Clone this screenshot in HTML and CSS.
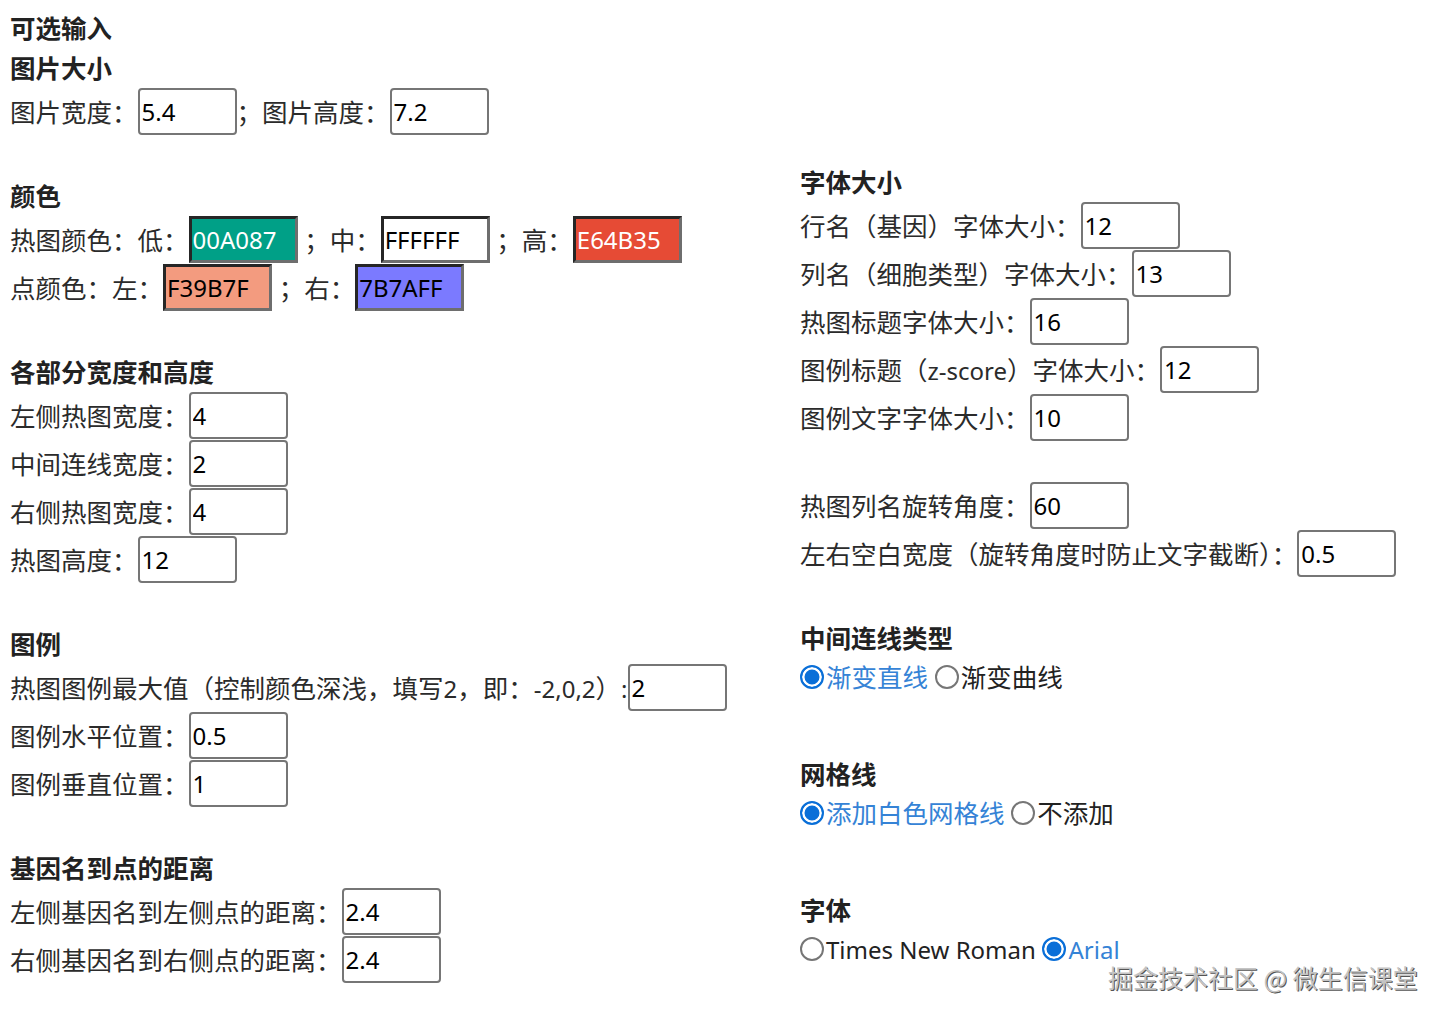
FILE: index.html
```html
<!DOCTYPE html>
<html lang="zh-CN">
<head>
<meta charset="utf-8">
<title>可选输入</title>
<link rel="stylesheet" href="styles.css">
</head>
<body>
<div class="page">
  <div class="col col-left">
    <div class="head">可选输入</div>
    <div class="head">图片大小</div>
    <div class="row">图片宽度：<input class="box" value="5.4">；图片高度：<input class="box" value="7.2"></div>
    <div class="gap"></div>

    <div class="head">颜色</div>
    <div class="row">热图颜色：低：<input class="swatch sw-low" value="00A087"> ；中：<input class="swatch sw-mid" value="FFFFFF"> ；高：<input class="swatch sw-high" value="E64B35"></div>
    <div class="row">点颜色：左：<input class="swatch sw-left" value="F39B7F"> ；右：<input class="swatch sw-right" value="7B7AFF"></div>
    <div class="gap"></div>

    <div class="head">各部分宽度和高度</div>
    <div class="row">左侧热图宽度：<input class="box" value="4"></div>
    <div class="row">中间连线宽度：<input class="box" value="2"></div>
    <div class="row">右侧热图宽度：<input class="box" value="4"></div>
    <div class="row">热图高度：<input class="box" value="12"></div>
    <div class="gap"></div>

    <div class="head">图例</div>
    <div class="row">热图图例最大值（控制颜色深浅，填写<span class="lat">2</span>，即：<span class="lat">-2,0,2</span>）<span class="lat">:</span><input class="box" value="2"></div>
    <div class="row">图例水平位置：<input class="box" value="0.5"></div>
    <div class="row">图例垂直位置：<input class="box" value="1"></div>
    <div class="gap"></div>

    <div class="head">基因名到点的距离</div>
    <div class="row">左侧基因名到左侧点的距离：<input class="box" value="2.4"></div>
    <div class="row">右侧基因名到右侧点的距离：<input class="box" value="2.4"></div>
  </div>

  <div class="col col-right">
    <div class="head">字体大小</div>
    <div class="row">行名（基因）字体大小：<input class="box" value="12"></div>
    <div class="row">列名（细胞类型）字体大小：<input class="box" value="13"></div>
    <div class="row">热图标题字体大小：<input class="box" value="16"></div>
    <div class="row">图例标题（<span class="lat">z-score</span>）字体大小：<input class="box" value="12"></div>
    <div class="row">图例文字字体大小：<input class="box" value="10"></div>
    <div class="gap"></div>
    <div class="row">热图列名旋转角度：<input class="box" value="60"></div>
    <div class="row">左右空白宽度（旋转角度时防止文字截断）：<input class="box" value="0.5"></div>
    <div class="gap"></div>

    <div class="head">中间连线类型</div>
    <div class="radios"><label class="opt on"><input type="radio" name="line" checked>渐变直线</label> <label class="opt"><input type="radio" name="line">渐变曲线</label></div>
    <div class="gap-lg"></div>

    <div class="head">网格线</div>
    <div class="radios"><label class="opt on"><input type="radio" name="grid" checked>添加白色网格线</label> <label class="opt"><input type="radio" name="grid">不添加</label></div>
    <div class="gap-lg"></div>

    <div class="head">字体</div>
    <div class="radios"><label class="opt"><input type="radio" name="font"><span class="lat">Times New Roman</span></label> <label class="opt on"><input type="radio" name="font" checked><span class="lat">Arial</span></label></div>
  </div>
</div>
<div class="watermark">掘金技术社区 @ 微生信课堂</div>
</body>
</html>
```

FILE: styles.css
```css
html, body {
  background: #ffffff;
}
body {
  margin: 8px;
  font-family: "Noto Sans", "Noto Sans CJK SC", sans-serif;
  font-size: 25.5px;
  color: #2b2b2b;
}
.page {
  display: flex;
}
.col-left {
  width: 790px;
  padding-left: 2px;
}
.col-right {
  flex: 1;
  padding-top: 154px;
}
.head {
  height: 40px;
  line-height: 40px;
  font-weight: bold;
  color: #222;
}
.row {
  height: 48px;
  line-height: 48px;
  white-space: nowrap;
}
.lat {
  font-size: 24px;
}
.gap {
  height: 40px;
}
.gap-lg {
  height: 58px;
}
input {
  font-family: "Noto Sans", "Noto Sans CJK SC", sans-serif;
  font-size: 24px;
  vertical-align: middle;
  box-sizing: border-box;
  margin: 0;
}
.box {
  width: 99px;
  height: 47px;
  border: 2px solid #767676;
  border-radius: 4px;
  padding: 0 2px;
  color: #000;
  background: #fff;
  position: relative;
  top: -4px;
}
.swatch {
  width: 109px;
  height: 47px;
  border-style: solid;
  border-width: 3px;
  border-color: #262626 #6e6e6e #6e6e6e #262626;
  padding: 0 1px;
  position: relative;
  top: -4px;
}
.sw-low { background: #00A087; color: #fff; }
.sw-mid { background: #FFFFFF; color: #000; }
.sw-high { background: #E64B35; color: #fff; }
.sw-left { background: #F39B7F; color: #000; }
.sw-right { background: #7B7AFF; color: #000; }

.radios {
  height: 38px;
  line-height: 38px;
  white-space: nowrap;
}
.opt {
  color: #222;
}
.opt.on {
  color: #3583d6;
}
.opt input {
  appearance: none;
  -webkit-appearance: none;
  width: 24px;
  height: 24px;
  border: 2px solid #767676;
  border-radius: 50%;
  background: #fff;
  margin: 0 2px 0 0;
  position: relative;
  top: -3px;
}
.opt input:checked {
  border-color: #0a6fd8;
  background: #0a6fd8;
  box-shadow: inset 0 0 0 2.5px #fff;
}
.watermark {
  position: absolute;
  left: 1108px;
  top: 959px;
  font-family: "Noto Sans CJK SC", sans-serif;
  font-size: 25px;
  line-height: 36px;
  color: #c4c4c4;
  text-shadow: 1px 1px 0 #555, -1px -1px 0 #fff;
}
```
